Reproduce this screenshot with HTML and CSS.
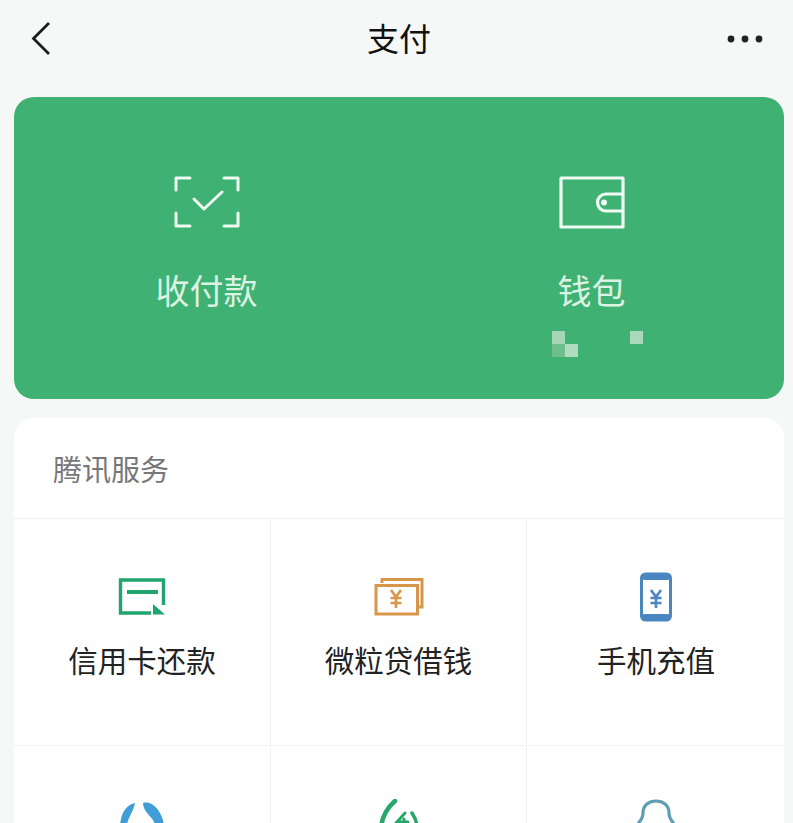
FILE: index.html
```html
<!DOCTYPE html>
<html lang="zh-CN">
<head>
<meta charset="utf-8">
<title>支付</title>
<link rel="stylesheet" href="styles.css">
</head>
<body>
<div class="page">
  <header class="nav">
    <svg class="nav-back" width="24" height="36" viewBox="0 0 24 36"><path d="M20 2 L4.500 17.500 L20 33" fill="none" stroke="#1c1c1c" stroke-width="2.800"/></svg>
    <h1 class="nav-title">支付</h1>
    <svg class="nav-more" width="36" height="10" viewBox="0 0 36 10"><circle cx="4" cy="5" r="3.400" fill="#222"/><circle cx="18" cy="5" r="3.400" fill="#222"/><circle cx="32" cy="5" r="3.400" fill="#222"/></svg>
  </header>

  <section class="hero">
    <div class="hero-item">
      <svg class="hero-icon" width="68" height="54" viewBox="0 0 68 54" fill="none" stroke="#eefaf2" stroke-width="3" stroke-linecap="round" stroke-linejoin="round">
        <path d="M17 3 H3 V15"/><path d="M51 3 H65 V15"/><path d="M3 38 V51 H17"/><path d="M65 38 V51 H51"/>
        <path d="M21 24 L31 34 L49 17"/>
      </svg>
      <div class="hero-label">收付款</div>
    </div>
    <div class="hero-item">
      <svg class="hero-icon" width="68" height="54" viewBox="0 0 68 54" fill="none" stroke="#f0faf4" stroke-width="3.200" stroke-linejoin="round">
        <path d="M3 3 H65 V52 H3 Z"/>
        <path d="M65 19 H48 A8.500 8.500 0 0 0 48 36 H65"/>
        <circle cx="46" cy="27.500" r="3" fill="#f0faf4" stroke="none"/>
      </svg>
      <div class="hero-label">钱包</div>
      <svg class="hero-mosaic" width="92" height="28" viewBox="0 0 92 28">
        <rect x="0" y="0" width="13" height="13" fill="#a7d6b7"/>
        <rect x="0" y="13" width="13" height="13" fill="#6fbf8d"/>
        <rect x="13" y="13" width="13" height="13" fill="#b1dbbf"/>
        <rect x="78" y="0" width="13" height="13" fill="#aad8ba"/>
      </svg>
    </div>
  </section>

  <section class="panel">
    <div class="panel-title">腾讯服务</div>
    <div class="grid">
      <div class="cell">
        <svg class="cell-icon" width="48" height="40" viewBox="0 0 48 40" fill="none" stroke="#21a56f" stroke-width="3.400">
          <path d="M33 36 H2.500 V3 H45.500 V28"/>
          <path d="M9 15 H40" stroke-width="4"/>
          <path d="M35 27 L47 37.500 H35 Z" fill="#21a56f" stroke="none"/>
        </svg>
        <div class="cell-label">信用卡还款</div>
      </div>
      <div class="cell">
        <svg class="cell-icon" width="52" height="40" viewBox="0 0 52 40" fill="none" stroke="#d9964a" stroke-width="3">
          <path d="M9 6 V2.500 H49 V30 H44"/>
          <path d="M3 8.500 H44.500 V37 H3 Z" fill="#fff"/>
          <path d="M18 13 L23 20 L28 13 M23 20 V31 M17.500 21 H28.500 M17.500 26 H28.500" stroke-width="2.600"/>
        </svg>
        <div class="cell-label">微粒贷借钱</div>
      </div>
      <div class="cell">
        <svg class="cell-icon" width="34" height="50" viewBox="0 0 34 50" fill="none">
          <rect x="2.500" y="2" width="29" height="46" rx="4" fill="#fff" stroke="#4a87c0" stroke-width="3"/>
          <rect x="2.500" y="2" width="29" height="6" rx="3" fill="#4a87c0"/>
          <rect x="2.500" y="42" width="29" height="6" rx="3" fill="#4a87c0"/>
          <path d="M12 18 L17 25 L22 18 M17 25 V36 M11.500 26 H22.500 M11.500 31 H22.500" stroke="#4a87c0" stroke-width="2.600"/>
        </svg>
        <div class="cell-label">手机充值</div>
      </div>
      <div class="cell">
        <svg class="cell-icon" width="48" height="50" viewBox="0 0 48 50" fill="none">
          <path d="M17 4 C8 6 3 14 2 26 L9 26 C10 18 15 14 17 4 Z" fill="#3f9ed6"/>
          <path d="M25 4 C34 1 44 12 46 26 L37 26 C36 18 25 14 25 4 Z" fill="#3f9ed6"/>
          <circle cx="20" cy="29" r="5" fill="#6fa8a8"/>
        </svg>
      </div>
      <div class="cell">
        <svg class="cell-icon" width="44" height="50" viewBox="0 0 44 50" fill="none" stroke="#27a76a" stroke-width="4.500" stroke-linecap="round">
          <path d="M18 2 C11 8 6 15 4 27"/>
          <path d="M35 14 C37 17 39 20 40 26" stroke-width="3.500"/>
          <path d="M28 14 L20 23 H31 M27 20 V28" stroke-width="3"/>
        </svg>
      </div>
      <div class="cell">
        <svg class="cell-icon" width="44" height="50" viewBox="0 0 44 50" fill="none" stroke="#5f9fb3" stroke-width="3.200">
          <path d="M3 26 C6 22 9 20 9 14 C9 6 15 2 22 2 C29 2 35 6 35 14 C35 20 38 22 41 26"/>
        </svg>
      </div>
    </div>
  </section>
</div>
</body>
</html>
```

FILE: styles.css
```css
* { box-sizing: border-box; }
html, body { margin: 0; padding: 0; height: 100%; overflow: hidden; }
body {
  background: #f6f7f7;
  font-family: "Noto Sans CJK SC", "Noto Sans", sans-serif;
}
.page { height: 823px; overflow: hidden; padding: 0 9px 0 14px; }

.nav {
  height: 97px;
  margin: 0 -9px 0 -14px;
  padding: 0 28px 24px 33px;
  display: grid;
  grid-template-columns: 1fr auto 1fr;
  align-items: center;
}
.nav-title { margin: 0; font-size: 32px; font-weight: 400; color: #111; line-height: 44px; }
.nav-more { margin: 5px 2px 0 0; justify-self: end; }
.nav-back { margin: 5px 0 0 -4px; }

.hero {
  height: 302px;
  background: #3fb172;
  border-radius: 20px;
  display: grid;
  grid-template-columns: 1fr 1fr;
  padding-top: 78px;
}
.hero-item { display: flex; flex-direction: column; align-items: center; }
.hero-icon { display: block; filter: blur(0.4px); }
.hero-label { margin-top: 36px; font-size: 34px; line-height: 50px; color: #dcf3e4; }
.hero-mosaic { margin: 16px 0 0 13px; filter: blur(0.6px); }

.panel {
  margin-top: 19px;
  background: #fff;
  border-radius: 20px 20px 0 0;
  height: 420px;
}
.panel-title {
  height: 101px;
  padding: 28px 0 0 39px;
  font-size: 29px;
  line-height: 44px;
  color: #77777a;
  border-bottom: 1px solid #efefef;
}
.grid { display: grid; grid-template-columns: 257px 257px 256px; grid-auto-rows: 227px; margin-right: 0; }
.cell {
  display: flex;
  flex-direction: column;
  align-items: center;
  padding-top: 53px;
  border-right: 1px solid #f2f2f2;
  border-bottom: 1px solid #f2f2f2;
}
.cell:nth-child(3n) { border-right: 0; }
.cell:nth-child(3n+2) { margin-right: 1px; }
.cell-icon { display: block; height: 50px; filter: blur(0.7px); }
.cell-label { margin-top: 15px; font-size: 29.500px; line-height: 44px; color: #222; }
```
